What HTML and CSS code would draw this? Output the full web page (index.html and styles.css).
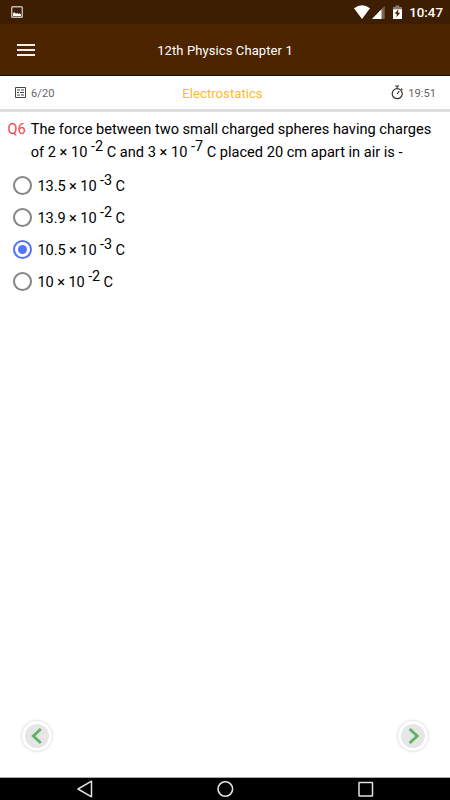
FILE: index.html
```html
<!DOCTYPE html>
<html lang="en">
<head>
    <meta charset="UTF-8">
    <meta name="viewport" content="width=device-width, initial-scale=1.0">
    <title>12th Physics Chapter 1</title>
    <link rel="stylesheet" href="styles.css">
</head>
<body>
    <div class="screen">
        <div class="status-bar">
            <svg class="picture-icon" width="12" height="12" viewBox="0 0 12 12">
                <rect x="0.7" y="0.7" width="10.6" height="10.6" rx="0.8" fill="none" stroke="#c5b9b0" stroke-width="1.4"/>
                <path d="M2 10V7.2l1.5-1 1.4 1.6L6.3 7l1.2 1 1-.8L10 8.5V10z" fill="#fff"/>
            </svg>
            <div class="status-right">
                <svg width="49" height="14" viewBox="0 0 49 14">
                    <path d="M0 3.3Q8-3 16 3.3L8 14z" fill="#fff"/>
                    <path d="M30.7 1v13H18z" fill="#7b6656"/>
                    <path d="M27.5 4.3V14H18z" fill="#fff"/>
                    <path d="M39 2h2.3V.5h4V2H48v3h-9z" fill="#8b7769"/>
                    <path d="M39 4.3h9V14h-9z" fill="#fff"/>
                    <path d="M44.3 4.3l-3.6 4.5h2.2l-.5 3.5 3.8-4.6H44z" fill="#3e1e02"/>
                </svg>
                <span class="clock">10:47</span>
            </div>
        </div>
        <header class="app-bar">
            <div class="menu-button">
                <span></span>
                <span></span>
                <span></span>
            </div>
            <h1>12th Physics Chapter 1</h1>
        </header>
        <div class="quiz-info">
            <div class="progress">
                <svg width="11" height="11" viewBox="0 0 11 11" fill="none" stroke="#444">
                    <path d="M.5.5h10v10H.5z" stroke-width="1"/>
                    <path d="M2 3h3M6 3h3M2 5.5h2M5 5.5h4M2 8h3M6 8h3" stroke-width="1.1"/>
                </svg>
                <span>6/20</span>
            </div>
            <div class="topic">Electrostatics</div>
            <div class="timer">
                <svg width="13" height="15" viewBox="0 0 13 15" fill="none" stroke="#333" stroke-width="1.2">
                    <circle cx="6.2" cy="8.7" r="5"/>
                    <path d="M4.2 1h4M6.2 1v2.5M10 3.6l1.5 1.3M6.2 9l2-3"/>
                </svg>
                <span>19:51</span>
            </div>
        </div>
        <main class="quiz">
            <div class="question">
                <span class="number">Q6</span>
                <p><span class="line">The force between two small charged spheres having charges</span> <span class="line">of 2 × 10 <sup>-2</sup> C and 3 × 10 <sup>-7</sup> C placed 20 cm apart in air is -</span></p>
            </div>
            <div class="options">
                <label class="option"><input type="radio" name="answer"><span>13.5 × 10 <sup>-3</sup> C</span></label>
                <label class="option"><input type="radio" name="answer"><span>13.9 × 10 <sup>-2</sup> C</span></label>
                <label class="option"><input type="radio" name="answer" checked><span>10.5 × 10 <sup>-3</sup> C</span></label>
                <label class="option"><input type="radio" name="answer"><span>10 × 10 <sup>-2</sup> C</span></label>
            </div>
        </main>
        <div class="pager">
            <div class="round-button">
                <svg width="24" height="24" viewBox="0 0 24 24"><circle cx="12" cy="12" r="12" fill="#e6e6e6"/><path d="M15.8 5L8.3 12l7.5 7" fill="none" stroke="#5cb462" stroke-width="2.8"/></svg>
            </div>
            <div class="round-button">
                <svg width="24" height="24" viewBox="0 0 24 24"><circle cx="12" cy="12" r="12" fill="#e6e6e6"/><path d="M8.7 5l7.5 7-7.5 7" fill="none" stroke="#5cb462" stroke-width="2.8"/></svg>
            </div>
        </div>
        <nav class="nav-bar">
            <svg width="18" height="20" viewBox="0 0 18 20"><path d="M15.5 2.2v15.6L2 10z" fill="none" stroke="#e2e2e2" stroke-width="1.5" stroke-linejoin="round"/></svg>
            <svg width="18" height="20" viewBox="0 0 18 20"><circle cx="9.3" cy="10" r="7.3" fill="none" stroke="#e2e2e2" stroke-width="1.6"/></svg>
            <svg width="18" height="20" viewBox="0 0 18 20"><rect x="3" y="3.5" width="13.5" height="13.5" rx="0.5" fill="none" stroke="#e2e2e2" stroke-width="1.5"/></svg>
        </nav>
    </div>
</body>
</html>
```

FILE: styles.css
```css
* {
    box-sizing: border-box;
}
body {
    margin: 0;
    font-family: Roboto, "Liberation Sans", sans-serif;
    background-color: #fff;
    color: #111;
}
svg {
    display: block;
}
.screen {
    display: flex;
    flex-direction: column;
    height: 800px;
    width: 450px;
    overflow: hidden;
}
.status-bar {
    display: flex;
    justify-content: space-between;
    align-items: center;
    height: 24px;
    padding: 0 7px 0 11px;
    background-color: #3e1e02;
}
.status-right {
    display: flex;
    align-items: center;
    gap: 6px;
}
.status-right svg {
    margin-bottom: 1px;
}
.clock {
    font-size: 13.3px;
    font-weight: 500;
    color: #fff;
}
.app-bar {
    display: grid;
    grid-template-columns: 52px 1fr 52px;
    align-items: center;
    height: 52px;
    background-color: #4d2400;
    border-bottom: 1px solid #240707;
}
.menu-button {
    display: flex;
    flex-direction: column;
    gap: 3px;
    padding-left: 17px;
}
.menu-button span {
    width: 18px;
    height: 2px;
    background-color: #f2eeeb;
}
.app-bar h1 {
    margin: 0;
    padding-top: 1px;
    text-align: center;
    font-size: 13px;
    font-weight: 400;
    letter-spacing: 0.1px;
    color: #fff;
}
.quiz-info {
    display: grid;
    grid-template-columns: 1fr auto 1fr;
    align-items: center;
    height: 36px;
    padding: 0 14px 0 15px;
    border-bottom: 3px solid #dedede;
    font-size: 11.2px;
    color: #666;
}
.progress, .timer {
    display: flex;
    align-items: center;
    gap: 5px;
}
.progress span, .timer span, .topic {
    padding-top: 1px;
}
.timer {
    justify-content: flex-end;
    gap: 4px;
}
.topic {
    margin-right: 6px;
    font-size: 13.2px;
    color: #fcb932;
}
.quiz {
    flex: 1;
    padding-top: 6px;
    font-size: 14.6px;
    color: #000;
}
sup {
    font-size: 14.4px;
    line-height: 0;
    vertical-align: 6px;
}
.question {
    display: flex;
    gap: 5px;
    padding-left: 7.5px;
    line-height: 23px;
}
.question p {
    margin: 0;
}
.line {
    display: block;
    white-space: nowrap;
}
.number {
    color: #f0444c;
}
.options {
    padding: 6px 0 0 13px;
}
.option {
    display: flex;
    align-items: center;
    gap: 5.5px;
    height: 32px;
}
.option span {
    letter-spacing: -0.1px;
}
.option input {
    appearance: none;
    display: grid;
    place-items: center;
    width: 19px;
    height: 19px;
    margin: 0 0 1px;
    border: 2px solid #858585;
    border-radius: 50%;
}
.option input:checked {
    border-color: #5474fa;
}
.option input:checked::before {
    content: "";
    width: 9px;
    height: 9px;
    border-radius: 50%;
    background-color: #5474fa;
}
.pager {
    display: flex;
    justify-content: space-between;
    padding: 0 22px 26px;
}
.round-button {
    display: flex;
    align-items: center;
    justify-content: center;
    width: 30px;
    height: 30px;
    border-radius: 50%;
    box-shadow: 0 0 2px 1px #e2e2e2;
}
.nav-bar {
    display: flex;
    justify-content: center;
    gap: 122px;
    height: 23px;
    padding-top: 1px;
    border-top: 1px solid #aaa;
    background-color: #000;
}
```
